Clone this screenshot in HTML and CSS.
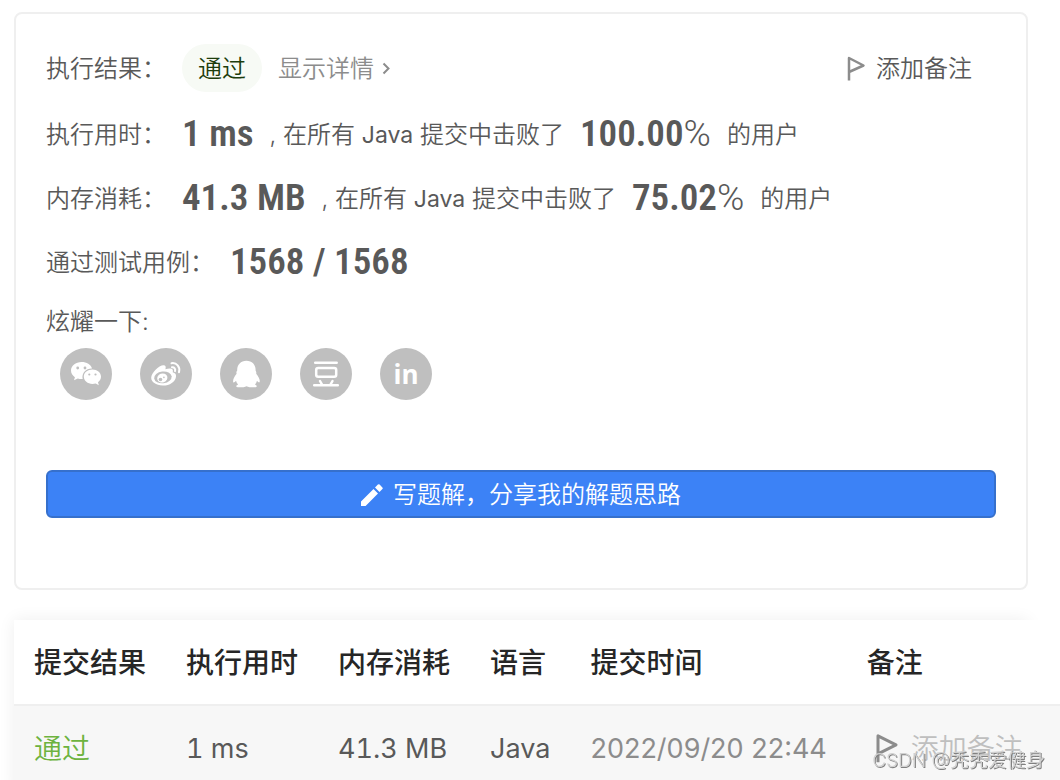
FILE: index.html
```html
<!DOCTYPE html>
<html lang="zh-CN">
<head>
    <meta charset="UTF-8">
    <meta name="viewport" content="width=device-width, initial-scale=1.0">
    <title>提交记录</title>
    <link rel="stylesheet" href="styles.css">
</head>
<body>
    <main class="result-card">
        <div class="row row-status">
            <span class="label">执行结果：</span>
            <span class="badge">通过</span>
            <a class="detail-link" href="#">显示详情
                <svg width="8" height="14" viewBox="0 0 8 14"><path d="M1.5 1.500l5 5-5 5"/></svg>
            </a>
            <button type="button" class="note-btn">
                <svg class="flag" width="20" height="26" viewBox="0 0 20 26"><path d="M3 24.500V2l14.500 7.500L3 16"/></svg>
                添加备注
            </button>
        </div>
        <div class="row">
            <span class="label">执行用时：</span>
            <span class="value">1 ms</span>
            <span>, 在所有 <span class="lang">Java</span> 提交中击败了</span>
            <span class="value">100.00<span class="percent">%</span></span>
            <span>的用户</span>
        </div>
        <div class="row">
            <span class="label">内存消耗：</span>
            <span class="value">41.3 MB</span>
            <span>, 在所有 <span class="lang">Java</span> 提交中击败了</span>
            <span class="value">75.02<span class="percent">%</span></span>
            <span>的用户</span>
        </div>
        <div class="row">
            <span class="label">通过测试用例：</span>
            <span class="value">1568 / 1568</span>
        </div>

        <div class="share-title">炫耀一下:</div>
        <div class="share-list">
            <a class="share" href="#" aria-label="微信">
                <svg viewBox="0 0 52 52">
                    <path class="fill" d="M21.5 14C15.700 14 11 17.700 11 22.600c0 2.800 1.500 5.100 3.900 6.700L14 32.300l3.800-1.800c1.400.5 3 .7 4.900.6-1.400-6.400 3.700-10.900 9.300-10.700C31 16.600 26.700 14 21.500 14z"/>
                    <path class="fill" d="M41 28.600c0-4.100-3.900-7.200-8.600-7.200s-8.600 3.100-8.600 7.200 3.900 7.400 8.600 7.400c1.200 0 2.300-.2 3.300-.5l3.100 1.700-.8-2.900c1.900-1.400 3-3.400 3-5.700z"/>
                    <circle class="dot" cx="17.700" cy="20" r="1.400"/>
                    <circle class="dot" cx="25" cy="20" r="1.400"/>
                    <circle class="dot" cx="29.300" cy="26.500" r="1.100"/>
                    <circle class="dot" cx="35.500" cy="26.500" r="1.100"/>
                </svg>
            </a>
            <a class="share" href="#" aria-label="微博">
                <svg viewBox="0 0 52 52">
                    <path class="fill" d="M24 17.300c2.100.3 1.900 2.200 1.400 4 3.500-1.300 8.600-1.700 7.300 3 2.600.7 3.600 2 3.300 4.400C35.500 34 29.300 37.700 22.700 37.500 16 37.300 11 34 11.200 29.500c.2-4.600 7.900-12.700 12.800-12.200z"/>
                    <ellipse class="dot" cx="22.900" cy="29.400" rx="8.800" ry="5.900" transform="rotate(-7 22.900 29.400)"/>
                    <ellipse class="fill" cx="22.300" cy="30" rx="5.200" ry="4.500" transform="rotate(-20 22.300 30)"/>
                    <circle class="dot" cx="20.500" cy="31.500" r="1.800"/>
                    <circle class="dot" cx="23.900" cy="29.400" r=".8"/>
                    <path class="line line-thin" d="M31.500 15.200c5-.9 9 3.600 7.500 9M32 19.300c2.300-.3 3.800 1.600 3 3.800"/>
                </svg>
            </a>
            <a class="share" href="#" aria-label="QQ">
                <svg viewBox="0 0 52 52">
                    <path class="fill" d="M26.400 12.700c-5.800 0-9.400 4.200-9.200 9.700-.9 1.100-1 2.300-.6 3.400-2.700 3.200-4.100 6.800-3.300 8.500.4.700 1.600-.2 2.700-1.500.3 1.500 1 2.800 2.100 3.800-1.400.7-2 1.300-1.700 2.100.9 1 7.400.9 10.100-.5 3 1.400 9.200 1.500 10.100.5.4-.8-.3-1.500-1.600-2.100 1-1 1.700-2.300 2-3.800 1.200 1.400 2.200 2.100 2.600 1.300.7-1.800-.7-5.100-3.400-8.300.3-1.200.1-2.300-.6-3.400.2-5.600-3.400-9.700-9.200-9.700z"/>
                </svg>
            </a>
            <a class="share" href="#" aria-label="豆瓣">
                <svg viewBox="0 0 52 52">
                    <path class="line" d="M15.200 14.700h21.500M14.200 37.300h23.600M20 33l2 3.500M32.500 33l-2 3.500"/>
                    <rect class="line" x="16.200" y="20" width="20" height="8.700" rx="2"/>
                </svg>
            </a>
            <a class="share share-in" href="#" aria-label="LinkedIn">in</a>
        </div>

        <button type="button" class="write-btn">
            <svg width="22" height="22" viewBox="0 0 22 22"><path d="M0 17.400V22h4.600L17 9.500 12.500 5zM21.400 5.100a1.300 1.300 0 0 0 0-1.700L18.600.6a1.300 1.300 0 0 0-1.700 0L14 3.500 18.500 8z"/></svg>
            写题解，分享我的解题思路
        </button>
    </main>

    <section class="submissions">
        <table>
            <thead>
                <tr>
                    <th>提交结果</th>
                    <th>执行用时</th>
                    <th>内存消耗</th>
                    <th>语言</th>
                    <th>提交时间</th>
                    <th class="col-note">备注</th>
                </tr>
            </thead>
            <tbody>
                <tr>
                    <td><a class="accepted" href="#">通过</a></td>
                    <td class="data">1 ms</td>
                    <td class="data">41.3 MB</td>
                    <td class="data">Java</td>
                    <td class="data time">2022/09/20 22:44</td>
                    <td>
                        <button type="button" class="note-btn note-btn-row">
                            <svg class="flag" width="24" height="32" viewBox="0 0 20 26"><path d="M2.500 24V2l15 7.500L2.500 17"/></svg>
                            添加备注
                        </button>
                    </td>
                </tr>
            </tbody>
        </table>
    </section>

    <div class="watermark">CSDN @秃秃爱健身</div>
</body>
</html>
```

FILE: styles.css
```css
* {
    box-sizing: border-box;
}

body {
    margin: 0;
    padding: 12px 32px 0 14px;
    height: 100vh;
    overflow: hidden;
    background: #fff;
    color: #595959;
    font-family: Inter, "Noto Sans CJK SC", sans-serif;
    font-size: 24px;
    font-weight: 350;
    line-height: 32px;
}

a {
    color: inherit;
    text-decoration: none;
}

button {
    font: inherit;
    cursor: pointer;
}

svg {
    flex: none;
}

.result-card {
    padding: 30px 30px 70px;
    border: 2px solid #efefef;
    border-radius: 8px;
}

.row {
    display: flex;
    align-items: center;
    gap: 16px;
    height: 64px;
    padding-top: 2px;
    white-space: nowrap;
}

.row-status {
    height: 48px;
    margin-bottom: 10px;
    padding-top: 0;
}

.badge {
    padding: 9px 16px 7px;
    border-radius: 24px;
    background: #f7faf5;
    color: #1d3d0c;
}

.row-status .label,
.detail-link {
    padding-top: 2px;
}

.detail-link {
    display: flex;
    align-items: center;
    gap: 8px;
    color: #8c8c8c;
}

.detail-link path {
    fill: none;
    stroke: #8c8c8c;
    stroke-width: 2;
}

.note-btn {
    display: flex;
    align-items: center;
    gap: 10px;
    margin-left: auto;
    padding: 2px 24px 0 0;
    border: 0;
    background: none;
    color: #595959;
}

.flag {
    fill: none;
    stroke: #8c8c8c;
    stroke-width: 2.5;
    stroke-linejoin: round;
}

.lang {
    font-size: 23px;
    font-weight: 400;
}

.value {
    padding-bottom: 2px;
    font-family: "Roboto Condensed", Roboto, sans-serif;
    font-size: 37px;
    font-weight: 600;
}

.percent {
    font-family: Roboto, sans-serif;
    font-weight: 300;
}

.share-title {
    margin-top: 12px;
}

.share-list {
    display: flex;
    gap: 28px;
    margin: 10px 0 70px 14px;
}

.share {
    width: 52px;
    height: 52px;
    border-radius: 50%;
    background: #bfbfbf;
}

.share .fill {
    fill: #fff;
}

.share .dot {
    fill: #bfbfbf;
}

.share .line {
    fill: none;
    stroke: #fff;
    stroke-width: 2.5;
    stroke-linecap: round;
}

.share .line-thin {
    stroke-width: 2;
}

.share-in {
    color: #fff;
    font-family: "Open Sans", sans-serif;
    font-size: 26px;
    font-weight: 700;
    line-height: 52px;
    text-align: center;
}

.write-btn {
    display: flex;
    justify-content: center;
    align-items: center;
    gap: 10px;
    width: 100%;
    height: 48px;
    padding: 2px 0 0;
    border: 2px solid #3670cc;
    border-radius: 6px;
    background: #3c82f6;
    color: #fff;
}

.write-btn path {
    fill: #fff;
}

.submissions {
    margin-top: 30px;
    box-shadow: 0 0 16px rgba(0, 0, 0, 0.07);
}

.submissions table {
    width: calc(100% + 32px);
    border-collapse: separate;
    border-spacing: 0;
    background: #fff;
    font-size: 28px;
    text-align: left;
    white-space: nowrap;
}

.submissions th,
.submissions td {
    height: 86px;
    padding: 0 20px;
}

.submissions th {
    padding-top: 2px;
    border-bottom: 2px solid #efefef;
    color: #262626;
    font-weight: 500;
}

.submissions td {
    background: #f7f7f7;
}

.submissions .data {
    font-size: 27px;
    font-weight: 400;
    font-variant-numeric: tabular-nums;
}

.col-note {
    width: 100%;
}

.accepted {
    color: #6db33f;
}

.submissions .time {
    color: #8c8c8c;
    font-variant-numeric: normal;
}

.note-btn-row {
    gap: 12px;
    margin-left: 8px;
    padding: 0;
    color: #bfbfbf;
}

.watermark {
    position: fixed;
    right: 15px;
    bottom: 3px;
    color: #d0d0d0;
    font-size: 19px;
    text-shadow: 1px 1px 0 #808080;
}
```
